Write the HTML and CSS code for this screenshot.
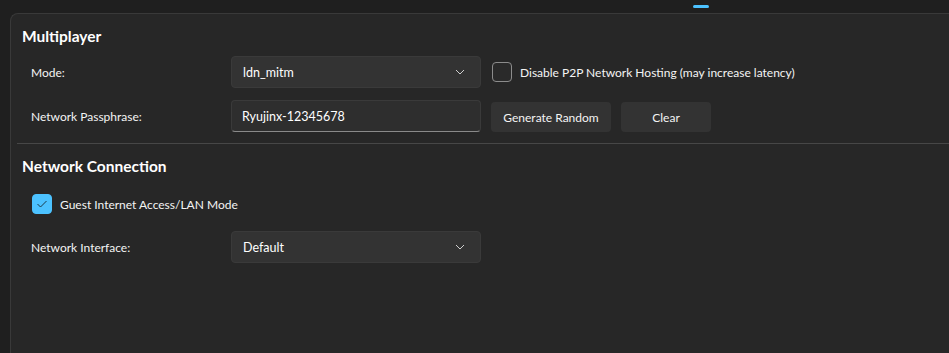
FILE: index.html
```html
<!DOCTYPE html>
<html lang="en">
<head>
    <meta charset="UTF-8">
    <meta name="viewport" content="width=device-width, initial-scale=1.0">
    <title>Network Settings</title>
    <link rel="stylesheet" href="styles.css">
</head>
<body>
    <div class="topbar">
        <div class="tab-indicator"></div>
    </div>

    <div class="panel">
        <section class="section">
            <h2>Multiplayer</h2>
            <div class="rows">
                <div class="row">
                    <span class="label">Mode:</span>
                    <div class="select">
                        <span>ldn_mitm</span>
                        <svg class="chevron" width="10" height="6" viewBox="0 0 10 6"><path d="M1 1 L5 5 L9 1" fill="none" stroke="#cfcfcf" stroke-width="1"/></svg>
                    </div>
                    <label class="check">
                        <span class="box"></span>
                        <span>Disable P2P Network Hosting (may increase latency)</span>
                    </label>
                </div>
                <div class="row">
                    <span class="label">Network Passphrase:</span>
                    <div class="textbox">Ryujinx-12345678</div>
                    <div class="buttons">
                        <button class="btn btn-wide">Generate Random</button>
                        <button class="btn btn-narrow">Clear</button>
                    </div>
                </div>
            </div>
        </section>

        <hr class="divider">

        <section class="section">
            <h2>Network Connection</h2>
            <label class="check check-guest">
                <span class="box checked">
                    <svg width="12" height="10" viewBox="0 0 12 10"><path d="M1.5 5 L4.5 8 L10.5 2" fill="none" stroke="#1b3a4a" stroke-width="1"/></svg>
                </span>
                <span>Guest Internet Access/LAN Mode</span>
            </label>
            <div class="row row-interface">
                <span class="label">Network Interface:</span>
                <div class="select">
                    <span>Default</span>
                    <svg class="chevron" width="10" height="6" viewBox="0 0 10 6"><path d="M1 1 L5 5 L9 1" fill="none" stroke="#cfcfcf" stroke-width="1"/></svg>
                </div>
            </div>
        </section>
    </div>
</body>
</html>
```

FILE: styles.css
```css
body {
    font-family: Lato, "Noto Sans", sans-serif;
    margin: 0;
    padding: 0;
    background-color: #1f1f1f;
    color: #f4f4f4;
    height: 353px;
    overflow: hidden;
    display: flex;
    flex-direction: column;
}

.topbar {
    height: 13px;
    flex-shrink: 0;
}

.tab-indicator {
    width: 16px;
    height: 3px;
    margin: 5px 0 0 693px;
    background-color: #4cc2ff;
    border-radius: 2px;
}

.panel {
    flex: 1;
    margin-left: 10px;
    background-color: #272727;
    border-top: 1px solid #393939;
    border-left: 1px solid #393939;
    border-top-left-radius: 8px;
}

.section {
    padding: 0 0 0 11px;
}

h2 {
    font-size: 15.5px;
    font-weight: 700;
    margin: 12px 0 0 0;
    line-height: 20px;
    color: #ffffff;
}

.rows {
    display: flex;
    flex-direction: column;
    gap: 12px;
    margin-top: 10px;
}

.row {
    display: flex;
    align-items: center;
    padding-left: 9px;
}

.label {
    width: 200px;
    font-size: 12px;
}

.select, .textbox {
    box-sizing: border-box;
    width: 250px;
    height: 32px;
    border-radius: 4px;
    background-color: #333333;
    border: 1px solid #3a3a3a;
    display: flex;
    align-items: center;
    padding: 0 11px;
    font-size: 12.5px;
    color: #ffffff;
}

.select span {
    flex: 1;
}

.chevron {
    margin-right: 4px;
}

.textbox {
    background-color: #2e2e2e;
    border-bottom: 1px solid #8a8a8a;
    padding-left: 10px;
}

.check {
    display: flex;
    align-items: center;
    gap: 8px;
    font-size: 12px;
    margin-left: 11px;
}

.box {
    box-sizing: border-box;
    width: 20px;
    height: 20px;
    border-radius: 4px;
    border: 1px solid #8c8c8c;
    background-color: #2a2a2a;
    display: flex;
    align-items: center;
    justify-content: center;
}

.box.checked {
    background-color: #4cc2ff;
    border-color: #4cc2ff;
}

.buttons {
    display: flex;
    gap: 10px;
    margin-left: 10px;
    align-self: flex-end;
}

.btn {
    height: 30px;
    border: none;
    border-radius: 4px;
    background-color: #333333;
    color: #f4f4f4;
    font-family: inherit;
    font-size: 12px;
    padding: 0;
}

.btn-wide {
    width: 120px;
}

.btn-narrow {
    width: 90px;
}

.divider {
    border: none;
    border-top: 1px solid #474747;
    margin: 11px 0 0 6px;
}

.check-guest {
    margin: 18px 0 0 10px;
}

.row-interface {
    margin-top: 17px;
}
```
